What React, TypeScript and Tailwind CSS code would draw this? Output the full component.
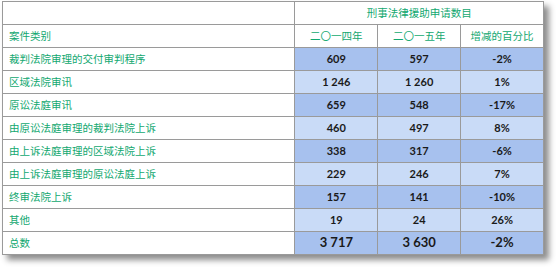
import React from 'react';

const rows = [
  { label: '裁判法院审理的交付审判程序', a: '609', b: '597', c: '-2%' },
  { label: '区域法院审讯', a: '1 246', b: '1 260', c: '1%' },
  { label: '原讼法庭审讯', a: '659', b: '548', c: '-17%' },
  { label: '由原讼法庭审理的裁判法院上诉', a: '460', b: '497', c: '8%' },
  { label: '由上诉法庭审理的区域法院上诉', a: '338', b: '317', c: '-6%' },
  { label: '由上诉法庭审理的原讼法庭上诉', a: '229', b: '246', c: '7%' },
  { label: '终审法院上诉', a: '157', b: '141', c: '-10%' },
  { label: '其他', a: '19', b: '24', c: '26%' },
];

const cjk = "font-['Noto_Sans_CJK_SC',sans-serif] text-[10.5px]";
const num = "font-['Lato','Noto_Sans',sans-serif] font-bold";

export default function App() {
  return (
    <div className="w-[560px] h-[273px] bg-white pl-[2px] pt-[1px]">
      <table className="w-[542px] border-collapse shadow-[5px_5px_6px_rgba(0,0,0,0.45)] text-[11px]">
        <colgroup>
          <col className="w-[293px]" />
          <col className="w-[83px]" />
          <col className="w-[83px]" />
          <col className="w-[83px]" />
        </colgroup>
        <thead>
          <tr className="h-[23px] bg-white">
            <th className="border border-[#9a9a9a]" />
            <th colSpan={3} className={`border border-[#9a9a9a] text-center font-normal text-[#12a870] ${cjk}`}>
              刑事法律援助申请数目
            </th>
          </tr>
          <tr className="h-[23px] bg-white">
            <th className={`border border-[#9a9a9a] text-left pl-[6px] font-normal text-[#12a870] ${cjk}`}>案件类别</th>
            <th className={`border border-[#9a9a9a] text-center font-normal text-[#12a870] ${cjk}`}>二〇一四年</th>
            <th className={`border border-[#9a9a9a] text-center font-normal text-[#12a870] ${cjk}`}>二〇一五年</th>
            <th className={`border border-[#9a9a9a] text-center font-normal text-[#12a870] ${cjk}`}>增减的百分比</th>
          </tr>
        </thead>
        <tbody>
          {rows.map((r, i) => {
            const shade = i % 2 === 0 ? 'bg-[#a7c1ee]' : 'bg-[#c9dbf7]';
            return (
              <tr key={r.label} className="h-[23px]">
                <td className={`border border-[#9a9a9a] bg-white pl-[6px] text-[#12a870] ${cjk}`}>{r.label}</td>
                <td className={`border border-[#9a9a9a] ${shade} text-center text-[#1a1a1a] ${num}`}>{r.a}</td>
                <td className={`border border-[#9a9a9a] ${shade} text-center text-[#1a1a1a] ${num}`}>{r.b}</td>
                <td className={`border border-[#9a9a9a] ${shade} text-center text-[#1a1a1a] ${num}`}>{r.c}</td>
              </tr>
            );
          })}
          <tr className="h-[23px]">
            <td className={`border border-[#9a9a9a] bg-white pl-[6px] text-[#12a870] ${cjk}`}>总数</td>
            <td className={`border border-[#9a9a9a] bg-[#a7c1ee] text-center text-[13px] text-[#1a1a1a] ${num}`}>3 717</td>
            <td className={`border border-[#9a9a9a] bg-[#a7c1ee] text-center text-[13px] text-[#1a1a1a] ${num}`}>3 630</td>
            <td className={`border border-[#9a9a9a] bg-[#a7c1ee] text-center text-[13px] text-[#1a1a1a] ${num}`}>-2%</td>
          </tr>
        </tbody>
      </table>
    </div>
  );
}
